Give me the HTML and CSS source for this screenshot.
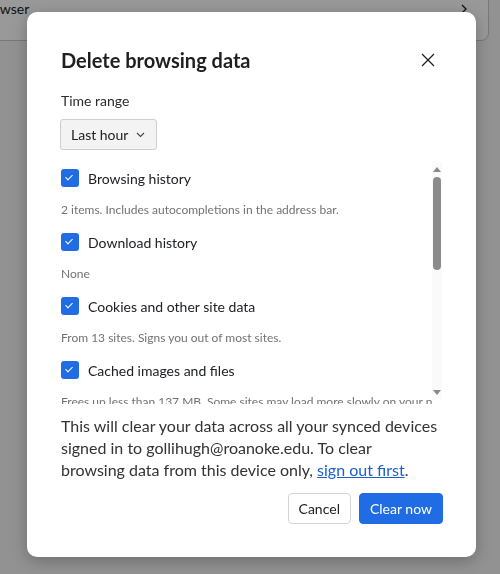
FILE: index.html
```html
<!DOCTYPE html>
<html lang="en">
  <head>
    <meta charset="UTF-8" />
    <meta name="viewport" content="width=device-width, initial-scale=1.0" />
    <title>Delete browsing data</title>
    <link rel="stylesheet" href="styles.css">
  </head>
  <body>
    <div class="page">
      <div class="page-card">
        <span class="page-card-label">Clear data from this browser</span>
        <svg class="page-card-arrow" width="6" height="10" viewBox="0 0 6 10">
          <path d="M1 1 L5 5 L1 9" stroke="#1f1f1f" stroke-width="1.3" fill="none" />
        </svg>
      </div>
    </div>

    <div class="scrim"></div>

    <div class="dialog" role="dialog" aria-labelledby="dialogTitle">
      <div class="dialog-header">
        <h2 id="dialogTitle">Delete browsing data</h2>
        <button class="close-btn" aria-label="Close">
          <svg width="14" height="14" viewBox="0 0 14 14">
            <path d="M1 1 L13 13 M13 1 L1 13" stroke="#202124" stroke-width="1.3" fill="none" />
          </svg>
        </button>
      </div>

      <label class="field-label" for="range">Time range</label>
      <div class="select-box" id="range">
        <span>Last hour</span>
        <svg width="9" height="6" viewBox="0 0 9 6">
          <path d="M1 1 L4.5 4.5 L8 1" stroke="#444" stroke-width="1.1" fill="none" />
        </svg>
      </div>

      <div class="list-wrap">
        <div class="list">
          <div class="item">
            <label class="check-row">
              <span class="checkbox"></span>
              Browsing history
            </label>
            <p class="item-desc">2 items. Includes autocompletions in the address bar.</p>
          </div>
          <div class="item">
            <label class="check-row">
              <span class="checkbox"></span>
              Download history
            </label>
            <p class="item-desc">None</p>
          </div>
          <div class="item">
            <label class="check-row">
              <span class="checkbox"></span>
              Cookies and other site data
            </label>
            <p class="item-desc">From 13 sites. Signs you out of most sites.</p>
          </div>
          <div class="item">
            <label class="check-row">
              <span class="checkbox"></span>
              Cached images and files
            </label>
            <p class="item-desc">Frees up less than 137 MB. Some sites may load more slowly on your next visit.</p>
          </div>
        </div>
        <!-- scrollbar track with arrow buttons -->
        <div class="scrollbar">
          <span class="arrow-up"></span>
          <span class="thumb"></span>
          <span class="arrow-down"></span>
        </div>
      </div>

      <p class="sync-note">
        This will clear your data across all your synced devices signed in to
        gollihugh@roanoke.edu. To clear browsing data from this device only,
        <a href="#">sign out first</a>.
      </p>

      <div class="dialog-actions">
        <button class="btn btn-cancel">Cancel</button>
        <button class="btn btn-primary">Clear now</button>
      </div>
    </div>
  </body>
</html>
```

FILE: styles.css
```css
body {
  margin: 0;
  height: 574px;
  overflow: hidden;
  font-family: Lato, "Noto Sans", Arial, sans-serif;
  background-color: #f3f3f3;
  color: #202124;
}
.page {
  padding-right: 11px;
}
.page-card {
  display: flex;
  justify-content: space-between;
  align-items: flex-start;
  height: 52px;
  margin-top: -11px;
  margin-left: -170px;
  padding: 11px 21px 0 0;
  background: #fff;
  border: 1px solid #c8c8c8;
  border-radius: 0 0 8px 8px;
  font-size: 14px;
  line-height: 16px;
  box-sizing: border-box;
}
.page-card-label {
  padding-left: 24px;
}
.page-card-arrow {
  margin-top: 3px;
}
.scrim {
  position: fixed;
  inset: 0;
  background: rgba(0, 0, 0, 0.4);
}
.dialog {
  position: absolute;
  left: 27px;
  top: 12px;
  width: 449px;
  height: 545px;
  box-sizing: border-box;
  padding: 34px 33px 0 34px;
  background: #fff;
  border-radius: 10px;
  box-shadow: 0 4px 16px rgba(0, 0, 0, 0.25);
}
.dialog-header {
  display: flex;
  justify-content: space-between;
  align-items: center;
  height: 28px;
}
h2 {
  margin: 0;
  font-size: 20px;
  font-weight: 700;
  color: #1f1f1f;
}
.close-btn {
  width: 24px;
  height: 24px;
  margin-right: 3px;
  padding: 0;
  border: none;
  background: none;
  display: flex;
  align-items: center;
  justify-content: center;
}
.field-label {
  display: block;
  margin-top: 17px;
  font-size: 14px;
  line-height: 20px;
  color: #2b2b2b;
}
.select-box {
  display: inline-flex;
  align-items: center;
  gap: 8px;
  margin-top: 8px;
  margin-left: -1px;
  height: 31px;
  padding: 0 11px 0 10px;
  box-sizing: border-box;
  background: #f3f3f3;
  border: 1px solid #cfcfcf;
  border-radius: 3px;
  font-size: 14px;
  color: #202124;
}
.list-wrap {
  display: flex;
  margin-top: 12px;
  height: 242px;
  overflow: hidden;
}
.list {
  flex: 1;
  padding-top: 7px;
  overflow: hidden;
}
.item + .item {
  margin-top: 15px;
}
.check-row {
  display: flex;
  align-items: center;
  gap: 9px;
  height: 18px;
  font-size: 14px;
  color: #202124;
}
.checkbox {
  position: relative;
  width: 18px;
  height: 18px;
  border-radius: 3px;
  background: #1f6ce4;
  flex-shrink: 0;
}
.checkbox::after {
  content: "";
  position: absolute;
  left: 6px;
  top: 4px;
  width: 3px;
  height: 6px;
  border: solid #fff;
  border-width: 0 1.5px 1.5px 0;
  transform: rotate(45deg);
}
.item-desc {
  margin: 15px 0 0;
  font-size: 12px;
  line-height: 16px;
  color: #727272;
  white-space: nowrap;
}
.scrollbar {
  width: 10px;
  margin-right: 1px;
  height: 237px;
  display: flex;
  flex-direction: column;
  align-items: center;
  background: #fafafa;
}
.arrow-up,
.arrow-down {
  width: 0;
  height: 0;
  border-left: 4px solid transparent;
  border-right: 4px solid transparent;
}
.arrow-up {
  margin-top: 5px;
  border-bottom: 5px solid #8a8a8a;
}
.arrow-down {
  margin-top: auto;
  margin-bottom: 4px;
  border-top: 5px solid #8a8a8a;
}
.thumb {
  width: 8px;
  height: 93px;
  margin-top: 5px;
  border-radius: 4px;
  background: #8b8b8b;
}
.sync-note {
  max-width: 378px;
  margin: 11px 0 0;
  font-size: 16px;
  line-height: 22px;
  color: #333;
}
.sync-note a {
  color: #1a5fd0;
}
.dialog-actions {
  display: flex;
  justify-content: flex-end;
  gap: 8px;
  margin-top: 12px;
}
.btn {
  height: 31px;
  padding: 0 10px;
  border-radius: 4px;
  font-family: inherit;
  font-size: 14px;
  cursor: pointer;
}
.btn-cancel {
  background: #fff;
  border: 1px solid #d4d4d4;
  color: #202124;
}
.btn-primary {
  background: #1f6ce4;
  border: 1px solid #1f6ce4;
  color: #fff;
}
```
